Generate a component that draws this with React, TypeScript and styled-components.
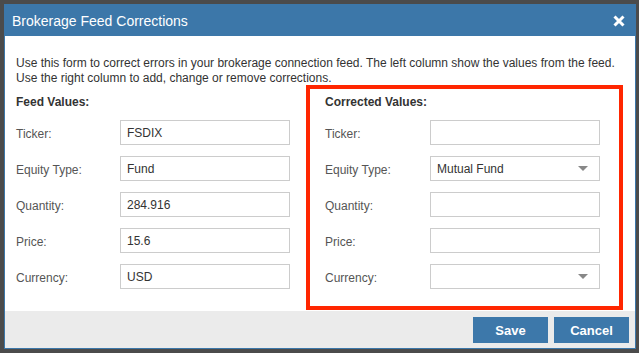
import React from "react";
import styled, { createGlobalStyle } from "styled-components";

const GlobalStyle = createGlobalStyle`
  html, body {
    margin: 0;
    padding: 0;
    background: #4b4b4b;
  }
  body {
    font-family: "Liberation Sans", Arial, sans-serif;
  }
`;

const Page = styled.div`
  width: 639px;
  height: 353px;
  padding: 4px 0 0 4px;
  box-sizing: border-box;
  background: #4b4b4b;
`;

const Dialog = styled.div`
  width: 632px;
  box-sizing: border-box;
  border: 1px solid #3c77a9;
  background: #fff;
  display: flex;
  flex-direction: column;
`;

const Header = styled.div`
  height: 31px;
  background: #3c77a9;
  color: #fff;
  display: flex;
  align-items: center;
  justify-content: space-between;
  padding: 0 10px 0 7px;
  font-size: 14px;
`;

const CloseButton = styled.button`
  border: none;
  background: none;
  padding: 0;
  width: 12px;
  height: 12px;
  display: flex;
  cursor: pointer;
`;

const Body = styled.div`
  position: relative;
  padding: 20px 11px 21px;
  height: 275px;
  box-sizing: border-box;
`;

const Intro = styled.p`
  margin: 0 0 9px;
  font-size: 12px;
  line-height: 15px;
  color: #333;
`;

const Columns = styled.div`
  display: grid;
  grid-template-columns: 274px 275px;
  column-gap: 35px;
`;

const Column = styled.div`
  display: flex;
  flex-direction: column;
  gap: 11px;
`;

const ColumnTitle = styled.div`
  font-size: 12px;
  line-height: 15px;
  font-weight: bold;
  color: #333;
  margin-bottom: -1px;
`;

const Row = styled.div<{ $labelWidth: number }>`
  display: grid;
  grid-template-columns: ${(p) => p.$labelWidth}px 170px;
  align-items: center;
  height: 25px;
`;

const Label = styled.label`
  font-size: 12px;
  color: #555;
  padding-top: 2px;
`;

const TextInput = styled.input`
  box-sizing: border-box;
  width: 170px;
  height: 25px;
  border: 1px solid #ccc;
  padding: 0 6px;
  font-family: inherit;
  font-size: 12px;
  color: #333;
  outline: none;
`;

const SelectBox = styled.div`
  box-sizing: border-box;
  width: 170px;
  height: 25px;
  border: 1px solid #ccc;
  padding: 0 11px 0 6px;
  display: flex;
  align-items: center;
  justify-content: space-between;
  font-size: 12px;
  color: #333;
`;

const Highlight = styled.div`
  position: absolute;
  left: 301px;
  top: 49px;
  width: 317px;
  height: 225px;
  box-sizing: border-box;
  border: 4px solid #ff2600;
  pointer-events: none;
`;

const Footer = styled.div`
  height: 37px;
  background: #ebebeb;
  display: flex;
  justify-content: flex-end;
  align-items: flex-start;
  gap: 6px;
  padding: 6px 6px 0 0;
  box-sizing: border-box;
`;

const Button = styled.button`
  width: 75px;
  height: 26px;
  border: none;
  background: #3d78aa;
  color: #fff;
  font-family: inherit;
  font-size: 13px;
  font-weight: bold;
  cursor: pointer;
`;

type Field = { label: string; value: string; select?: boolean };

const feedFields: Field[] = [
  { label: "Ticker:", value: "FSDIX" },
  { label: "Equity Type:", value: "Fund" },
  { label: "Quantity:", value: "284.916" },
  { label: "Price:", value: "15.6" },
  { label: "Currency:", value: "USD" },
];

const correctedFields: Field[] = [
  { label: "Ticker:", value: "" },
  { label: "Equity Type:", value: "Mutual Fund", select: true },
  { label: "Quantity:", value: "" },
  { label: "Price:", value: "" },
  { label: "Currency:", value: "", select: true },
];

const Caret = () => (
  <svg width="10" height="5" viewBox="0 0 10 5">
    <path d="M0 0 L10 0 L5 5 Z" fill="#888" />
  </svg>
);

const FieldColumn = ({
  title,
  fields,
  labelWidth,
}: {
  title: string;
  fields: Field[];
  labelWidth: number;
}) => (
  <Column>
    <ColumnTitle>{title}</ColumnTitle>
    {fields.map((f) => (
      <Row key={f.label} $labelWidth={labelWidth}>
        <Label>{f.label}</Label>
        {f.select ? (
          <SelectBox>
            <span>{f.value}</span>
            <Caret />
          </SelectBox>
        ) : (
          <TextInput defaultValue={f.value} />
        )}
      </Row>
    ))}
  </Column>
);

const App = () => (
  <Page>
    <GlobalStyle />
    <Dialog>
      <Header>
        <span>Brokerage Feed Corrections</span>
        <CloseButton aria-label="Close">
          <svg width="12" height="12" viewBox="0 0 12 12">
            <path d="M1.5 1.5 L10.5 10.5 M10.5 1.5 L1.5 10.5" stroke="#fff" strokeWidth="3" />
          </svg>
        </CloseButton>
      </Header>
      <Body>
        <Intro>
          Use this form to correct errors in your brokerage connection feed. The left column show the values from the feed.
          <br />
          Use the right column to add, change or remove corrections.
        </Intro>
        <Columns>
          <FieldColumn title="Feed Values:" fields={feedFields} labelWidth={104} />
          <FieldColumn title="Corrected Values:" fields={correctedFields} labelWidth={105} />
        </Columns>
        <Highlight />
      </Body>
      <Footer>
        <Button>Save</Button>
        <Button>Cancel</Button>
      </Footer>
    </Dialog>
  </Page>
);

export default App;
